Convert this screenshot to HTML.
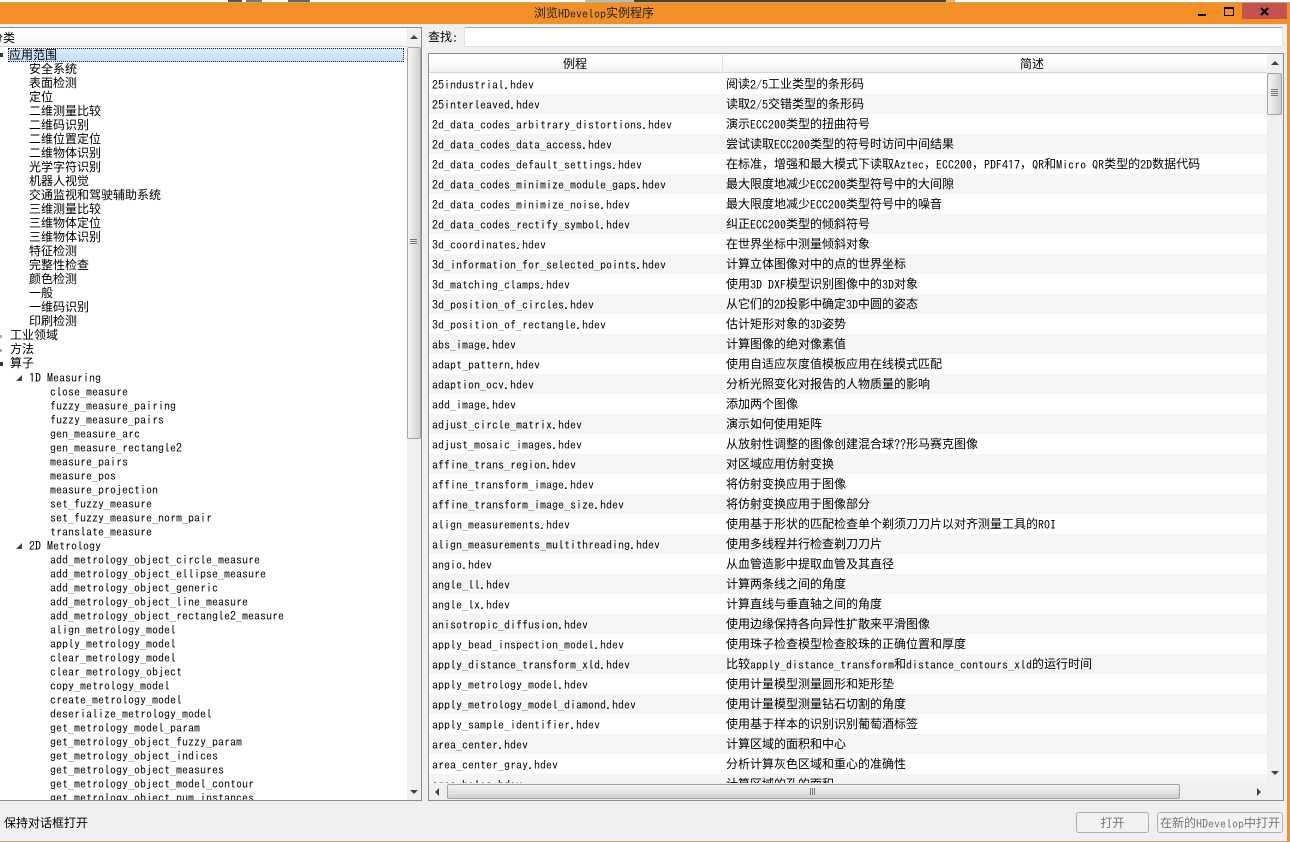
<!DOCTYPE html>
<html><head><meta charset="utf-8"><style>
html,body{margin:0;padding:0;width:1290px;height:842px;overflow:hidden;background:#f0f0f0}
body{position:relative;font:12px/14px "WenQuanYi Zen Hei","Noto Sans CJK SC","Liberation Sans",sans-serif;color:#000}
i{font:normal 12px "IPAGothic","Liberation Mono",monospace;position:relative;top:1px}
.a{position:absolute;box-sizing:border-box}
.tree div{height:14px;line-height:14px;white-space:nowrap;position:relative}
.t1{padding-left:29px}.t0{padding-left:10px}.t2{padding-left:29px}.t3{padding-left:50px}
.tb{overflow:hidden}
.tb div{height:20px;line-height:20px;white-space:nowrap;position:relative;background:#fff}
.tb div:nth-child(even){background:#f5f5f5}
.tb b{font-weight:normal;position:absolute;left:3px;top:0}
.tb u{text-decoration:none;position:absolute;left:297px;top:0}
.sb{background:#f0f0f0}
.thumb{background:linear-gradient(90deg,#f4f4f4,#e6e6e6 45%,#cfcfcf);border:1px solid #a4a4a4;border-radius:2px}
.up,.dn,.lf,.rt{position:absolute;width:0;height:0}
.up{border:4px solid transparent;border-top:0;border-bottom:4px solid #444}
.dn{border:4px solid transparent;border-bottom:0;border-top:4px solid #444}
.lf{border:4px solid transparent;border-left:0;border-right:4px solid #444}
.rt{border:4px solid transparent;border-right:0;border-left:4px solid #444}
.grip{position:absolute;height:1px;background:#777}
.btn{border:1px solid #b0b0b0;border-radius:3px;background:#f2f2f2;color:#777;text-align:center;line-height:19px;white-space:nowrap}
</style></head><body>
<div class="a" style="left:0;top:0;width:1290px;height:3px;background:#fff"></div>
<div class="a" style="left:228px;top:0;width:14px;height:2px;background:#555"></div>
<div class="a" style="left:246px;top:0;width:16px;height:2px;background:#777"></div>
<div class="a" style="left:288px;top:0;width:22px;height:2px;background:#666"></div>
<div class="a" style="left:585px;top:0;width:49px;height:2px;background:#bbb"></div>
<div class="a" style="left:634px;top:0;width:312px;height:2px;background:#45432f"></div>
<div class="a" style="left:946px;top:0;width:9px;height:2px;background:#f0b070"></div>
<div class="a" style="left:0;top:2px;width:1290px;height:1px;background:#c8a868"></div>
<div class="a" style="left:0;top:3px;width:1290px;height:21px;background:#f28f26"></div>
<div class="a" style="left:534px;top:6px;height:14px;white-space:nowrap;color:#222">浏览<i>HDevelop</i>实例程序</div>
<div class="a" style="left:1198px;top:14px;width:8px;height:2px;background:#000"></div>
<div class="a" style="left:1224px;top:7px;width:10px;height:9px;border:1px solid #000;border-top-width:2px"></div>
<div class="a" style="left:1242px;top:3px;width:45px;height:16px;background:#c75050"></div>
<svg class="a" style="left:1260px;top:7px" width="10" height="9"><path d="M1 1L8 8M8 1L1 8" stroke="#000" stroke-width="2" fill="none"/></svg>
<div class="a" style="left:1287px;top:3px;width:3px;height:838px;background:#f28f26"></div>
<div class="a" style="left:0;top:841px;width:1290px;height:1px;background:#c8a868"></div>

<!-- left tree -->
<div class="a" style="left:0;top:27px;width:422px;height:774px;background:#fff;border:1px solid #8a8d94;border-left:0;overflow:hidden">
 <div class="a" style="left:0;top:0;width:407px;height:19px;background:linear-gradient(#fff 30%,#f2f3f5);border-bottom:1px solid #d5d5d5;line-height:19px;padding-left:0;overflow:hidden"><span style="position:absolute;left:-9px;top:0;white-space:nowrap">分类</span></div>
 <div class="a" style="left:8px;top:20px;width:396px;height:14px;background:linear-gradient(#dcebfd,#c4defa);border:1px dotted #223"></div>
 <div class="a tree" style="left:0;top:20px;width:407px">
<div class="t0" style="padding-left:9px">应用范围</div>
<div class="t1">安全系统</div><div class="t1">表面检测</div><div class="t1">定位</div><div class="t1">二维测量比较</div><div class="t1">二维码识别</div><div class="t1">二维位置定位</div><div class="t1">二维物体识别</div><div class="t1">光学字符识别</div><div class="t1">机器人视觉</div><div class="t1">交通监视和驾驶辅助系统</div><div class="t1">三维测量比较</div><div class="t1">三维物体定位</div><div class="t1">三维物体识别</div><div class="t1">特征检测</div><div class="t1">完整性检查</div><div class="t1">颜色检测</div><div class="t1">一般</div><div class="t1">一维码识别</div><div class="t1">印刷检测</div>
<div class="t0">工业领域</div><div class="t0">方法</div><div class="t0">算子</div>
<div class="t2"><i>1D Measuring</i></div>
<div class="t3"><i>close_measure</i></div><div class="t3"><i>fuzzy_measure_pairing</i></div><div class="t3"><i>fuzzy_measure_pairs</i></div><div class="t3"><i>gen_measure_arc</i></div><div class="t3"><i>gen_measure_rectangle2</i></div><div class="t3"><i>measure_pairs</i></div><div class="t3"><i>measure_pos</i></div><div class="t3"><i>measure_projection</i></div><div class="t3"><i>set_fuzzy_measure</i></div><div class="t3"><i>set_fuzzy_measure_norm_pair</i></div><div class="t3"><i>translate_measure</i></div>
<div class="t2"><i>2D Metrology</i></div>
<div class="t3"><i>add_metrology_object_circle_measure</i></div><div class="t3"><i>add_metrology_object_ellipse_measure</i></div><div class="t3"><i>add_metrology_object_generic</i></div><div class="t3"><i>add_metrology_object_line_measure</i></div><div class="t3"><i>add_metrology_object_rectangle2_measure</i></div><div class="t3"><i>align_metrology_model</i></div><div class="t3"><i>apply_metrology_model</i></div><div class="t3"><i>clear_metrology_model</i></div><div class="t3"><i>clear_metrology_object</i></div><div class="t3"><i>copy_metrology_model</i></div><div class="t3"><i>create_metrology_model</i></div><div class="t3"><i>deserialize_metrology_model</i></div><div class="t3"><i>get_metrology_model_param</i></div><div class="t3"><i>get_metrology_object_fuzzy_param</i></div><div class="t3"><i>get_metrology_object_indices</i></div><div class="t3"><i>get_metrology_object_measures</i></div><div class="t3"><i>get_metrology_object_model_contour</i></div><div class="t3"><i>get_metrology_object_num_instances</i></div>
 </div>
 <div class="a" style="left:0;top:25px;width:3px;height:4px;background:#333"></div>
 <div class="a" style="left:0;top:307px;width:2px;height:3px;background:#aaa"></div>
 <div class="a" style="left:0;top:321px;width:2px;height:3px;background:#aaa"></div>
 <div class="a" style="left:0;top:334px;width:3px;height:4px;background:#333"></div>
 <svg class="a" style="left:15px;top:346px" width="8" height="8"><path d="M7 1V7H1Z" fill="#444"/></svg>
 <svg class="a" style="left:15px;top:514px" width="8" height="8"><path d="M7 1V7H1Z" fill="#444"/></svg>
 <div class="a sb" style="left:407px;top:0;width:14px;height:772px">
  <div class="up" style="left:3px;top:7px"></div>
  <div class="a thumb" style="left:0;top:19px;width:14px;height:392px"></div>
  <div class="grip" style="left:3px;top:211px;width:7px"></div><div class="grip" style="left:3px;top:213px;width:7px"></div><div class="grip" style="left:3px;top:215px;width:7px"></div>
  <div class="dn" style="left:3px;top:762px"></div>
 </div>
</div>

<!-- search -->
<div class="a" style="left:428px;top:30px;white-space:nowrap">查找<i>:</i></div>
<div class="a" style="left:464px;top:27px;width:819px;height:20px;background:#fff;border:1px solid #dfe1e5;border-top-color:#a5a8ad;border-radius:2px"></div>

<!-- right table -->
<div class="a" style="left:428px;top:53px;width:856px;height:748px;background:#fff;border:1px solid #8a8d94;overflow:hidden">
 <div class="a" style="left:0;top:0;width:838px;height:19px;background:linear-gradient(#fff 30%,#f2f3f5);border-bottom:1px solid #d5d5d5"></div>
 <div class="a" style="left:293px;top:1px;width:1px;height:17px;background:#e3e3e3"></div>
 <div class="a" style="left:134px;top:3px">例程</div>
 <div class="a" style="left:591px;top:3px">简述</div>
 <div class="a tb" style="left:0;top:20px;width:838px;height:709px">
<div><b><i>25industrial.hdev</i></b><u>阅读<i>2/5</i>工业类型的条形码</u></div>
<div><b><i>25interleaved.hdev</i></b><u>读取<i>2/5</i>交错类型的条形码</u></div>
<div><b><i>2d_data_codes_arbitrary_distortions.hdev</i></b><u>演示<i>ECC200</i>类型的扭曲符号</u></div>
<div><b><i>2d_data_codes_data_access.hdev</i></b><u>尝试读取<i>ECC200</i>类型的符号时访问中间结果</u></div>
<div><b><i>2d_data_codes_default_settings.hdev</i></b><u>在标准，增强和最大模式下读取<i>Aztec</i>，<i>ECC200</i>，<i>PDF417</i>，<i>QR</i>和<i>Micro QR</i>类型的<i>2D</i>数据代码</u></div>
<div><b><i>2d_data_codes_minimize_module_gaps.hdev</i></b><u>最大限度地减少<i>ECC200</i>类型符号中的大间隙</u></div>
<div><b><i>2d_data_codes_minimize_noise.hdev</i></b><u>最大限度地减少<i>ECC200</i>类型符号中的噪音</u></div>
<div><b><i>2d_data_codes_rectify_symbol.hdev</i></b><u>纠正<i>ECC200</i>类型的倾斜符号</u></div>
<div><b><i>3d_coordinates.hdev</i></b><u>在世界坐标中测量倾斜对象</u></div>
<div><b><i>3d_information_for_selected_points.hdev</i></b><u>计算立体图像对中的点的世界坐标</u></div>
<div><b><i>3d_matching_clamps.hdev</i></b><u>使用<i>3D DXF</i>模型识别图像中的<i>3D</i>对象</u></div>
<div><b><i>3d_position_of_circles.hdev</i></b><u>从它们的<i>2D</i>投影中确定<i>3D</i>中圆的姿态</u></div>
<div><b><i>3d_position_of_rectangle.hdev</i></b><u>估计矩形对象的<i>3D</i>姿势</u></div>
<div><b><i>abs_image.hdev</i></b><u>计算图像的绝对像素值</u></div>
<div><b><i>adapt_pattern.hdev</i></b><u>使用自适应灰度值模板应用在线模式匹配</u></div>
<div><b><i>adaption_ocv.hdev</i></b><u>分析光照变化对报告的人物质量的影响</u></div>
<div><b><i>add_image.hdev</i></b><u>添加两个图像</u></div>
<div><b><i>adjust_circle_matrix.hdev</i></b><u>演示如何使用矩阵</u></div>
<div><b><i>adjust_mosaic_images.hdev</i></b><u>从放射性调整的图像创建混合球<i>??</i>形马赛克图像</u></div>
<div><b><i>affine_trans_region.hdev</i></b><u>对区域应用仿射变换</u></div>
<div><b><i>affine_transform_image.hdev</i></b><u>将仿射变换应用于图像</u></div>
<div><b><i>affine_transform_image_size.hdev</i></b><u>将仿射变换应用于图像部分</u></div>
<div><b><i>align_measurements.hdev</i></b><u>使用基于形状的匹配检查单个剃须刀刀片以对齐测量工具的<i>ROI</i></u></div>
<div><b><i>align_measurements_multithreading.hdev</i></b><u>使用多线程并行检查剃刀刀片</u></div>
<div><b><i>angio.hdev</i></b><u>从血管造影中提取血管及其直径</u></div>
<div><b><i>angle_ll.hdev</i></b><u>计算两条线之间的角度</u></div>
<div><b><i>angle_lx.hdev</i></b><u>计算直线与垂直轴之间的角度</u></div>
<div><b><i>anisotropic_diffusion.hdev</i></b><u>使用边缘保持各向异性扩散来平滑图像</u></div>
<div><b><i>apply_bead_inspection_model.hdev</i></b><u>使用珠子检查模型检查胶珠的正确位置和厚度</u></div>
<div><b><i>apply_distance_transform_xld.hdev</i></b><u>比较<i>apply_distance_transform</i>和<i>distance_contours_xld</i>的运行时间</u></div>
<div><b><i>apply_metrology_model.hdev</i></b><u>使用计量模型测量圆形和矩形垫</u></div>
<div><b><i>apply_metrology_model_diamond.hdev</i></b><u>使用计量模型测量钻石切割的角度</u></div>
<div><b><i>apply_sample_identifier.hdev</i></b><u>使用基于样本的识别识别葡萄酒标签</u></div>
<div><b><i>area_center.hdev</i></b><u>计算区域的面积和中心</u></div>
<div><b><i>area_center_gray.hdev</i></b><u>分析计算灰色区域和重心的准确性</u></div>
<div><b><i>area_holes.hdev</i></b><u>计算区域的孔的面积</u></div>
 </div>
 <!-- v scrollbar -->
 <div class="a sb" style="left:838px;top:19px;width:16px;height:710px"></div>
 <div class="a sb" style="left:838px;top:0;width:16px;height:19px"><div class="up" style="left:4px;top:7px"></div></div>
 <div class="a thumb" style="left:838px;top:19px;width:15px;height:42px"></div>
 <div class="grip" style="left:842px;top:35px;width:7px"></div><div class="grip" style="left:842px;top:37px;width:7px"></div><div class="grip" style="left:842px;top:39px;width:7px"></div><div class="grip" style="left:842px;top:41px;width:7px"></div>
 <div class="dn" style="left:842px;top:717px"></div>
 <!-- h scrollbar -->
 <div class="a sb" style="left:0;top:729px;width:854px;height:17px">
  <div class="lf" style="left:6px;top:5px"></div>
  <div class="a" style="left:18px;top:1px;width:733px;height:15px;background:linear-gradient(#f4f4f4,#e6e6e6 45%,#cfcfcf);border:1px solid #a4a4a4;border-radius:2px"></div>
  <div class="a" style="left:381px;top:5px;width:1px;height:7px;background:#777"></div><div class="a" style="left:383px;top:5px;width:1px;height:7px;background:#777"></div><div class="a" style="left:385px;top:5px;width:1px;height:7px;background:#777"></div>
  <div class="rt" style="left:828px;top:5px"></div>
 </div>
</div>

<!-- bottom -->
<div class="a" style="left:4px;top:816px;white-space:nowrap">保持对话框打开</div>
<div class="a btn" style="left:1076px;top:812px;width:73px;height:21px">打开</div>
<div class="a btn" style="left:1157px;top:812px;width:126px;height:21px">在新的<i>HDevelop</i>中打开</div>
</body></html>
